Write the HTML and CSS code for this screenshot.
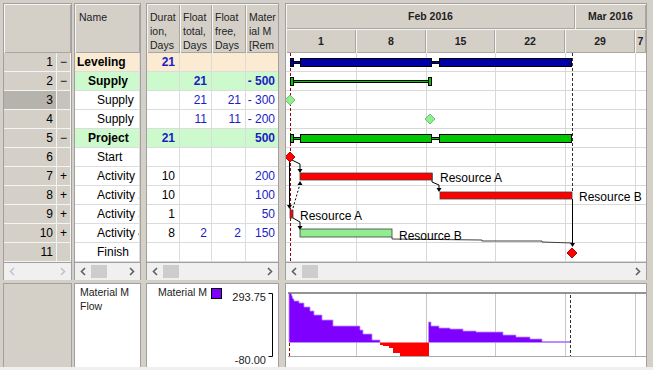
FILE: index.html
```html
<!DOCTYPE html>
<html lang="en">
<head>
    <meta charset="UTF-8">
    <title>Resource Leveling</title>
    <link rel="stylesheet" href="styles.css">
</head>
<body>
<div class="app">
    <div class="top">
        <!-- row numbers -->
        <div class="pane p-rows">
            <div class="hdr"><div class="hcell full"></div></div>
            <div class="grid">
                <div class="row"><span class="num">1</span><span class="exp">−</span></div>
                <div class="row"><span class="num">2</span><span class="exp">−</span></div>
                <div class="row sel"><span class="num">3</span><span class="exp"></span></div>
                <div class="row"><span class="num">4</span><span class="exp"></span></div>
                <div class="row"><span class="num">5</span><span class="exp">−</span></div>
                <div class="row"><span class="num">6</span><span class="exp"></span></div>
                <div class="row"><span class="num">7</span><span class="exp">+</span></div>
                <div class="row"><span class="num">8</span><span class="exp">+</span></div>
                <div class="row"><span class="num">9</span><span class="exp">+</span></div>
                <div class="row"><span class="num">10</span><span class="exp">+</span></div>
                <div class="row"><span class="num">11</span><span class="exp"></span></div>
            </div>
            <div class="scroll off">
                <span class="arrow"><svg width="6" height="9" viewBox="0 0 6 9"><path d="M5 1L1.5 4.5L5 8"/></svg></span>
                <span class="track"></span>
                <span class="arrow"><svg width="6" height="9" viewBox="0 0 6 9"><path d="M1 1L4.5 4.5L1 8"/></svg></span>
            </div>
        </div>

        <!-- names -->
        <div class="pane p-name">
            <div class="hdr"><div class="hcell full">Name</div></div>
            <div class="grid">
                <div class="row beige"><span class="name b">Leveling</span></div>
                <div class="row green"><span class="name b l1">Supply</span></div>
                <div class="row"><span class="name l2">Supply</span></div>
                <div class="row"><span class="name l2">Supply</span></div>
                <div class="row green"><span class="name b l1">Project</span></div>
                <div class="row"><span class="name l2">Start</span></div>
                <div class="row"><span class="name l2">Activity 1</span></div>
                <div class="row"><span class="name l2">Activity 2</span></div>
                <div class="row"><span class="name l2">Activity 3</span></div>
                <div class="row"><span class="name l2">Activity 4</span></div>
                <div class="row"><span class="name l2">Finish</span></div>
            </div>
            <div class="scroll">
                <span class="arrow"><svg width="6" height="9" viewBox="0 0 6 9"><path d="M5 1L1.5 4.5L5 8"/></svg></span>
                <span class="thumb"></span>
                <span class="track"></span>
                <span class="arrow"><svg width="6" height="9" viewBox="0 0 6 9"><path d="M1 1L4.5 4.5L1 8"/></svg></span>
            </div>
        </div>

        <!-- columns -->
        <div class="pane p-cols">
            <div class="hdr cols">
                <div class="hcell c-dur">Duration, Days</div>
                <div class="hcell c-ft">Float total, Days</div>
                <div class="hcell c-ff">Float free, Days</div>
                <div class="hcell c-mat">Material M [Remaining]</div>
            </div>
            <div class="grid">
                <div class="row beige"><span class="c-dur v b">21</span><span class="c-ft"></span><span class="c-ff"></span><span class="c-mat"></span></div>
                <div class="row green"><span class="c-dur"></span><span class="c-ft v b">21</span><span class="c-ff"></span><span class="c-mat v b">- 500</span></div>
                <div class="row"><span class="c-dur"></span><span class="c-ft v">21</span><span class="c-ff v">21</span><span class="c-mat v">- 300</span></div>
                <div class="row"><span class="c-dur"></span><span class="c-ft v">11</span><span class="c-ff v">11</span><span class="c-mat v">- 200</span></div>
                <div class="row green"><span class="c-dur v b">21</span><span class="c-ft"></span><span class="c-ff"></span><span class="c-mat v b">500</span></div>
                <div class="row"><span class="c-dur"></span><span class="c-ft"></span><span class="c-ff"></span><span class="c-mat"></span></div>
                <div class="row"><span class="c-dur">10</span><span class="c-ft"></span><span class="c-ff"></span><span class="c-mat v">200</span></div>
                <div class="row"><span class="c-dur">10</span><span class="c-ft"></span><span class="c-ff"></span><span class="c-mat v">100</span></div>
                <div class="row"><span class="c-dur">1</span><span class="c-ft"></span><span class="c-ff"></span><span class="c-mat v">50</span></div>
                <div class="row"><span class="c-dur">8</span><span class="c-ft v">2</span><span class="c-ff v">2</span><span class="c-mat v">150</span></div>
                <div class="row"><span class="c-dur"></span><span class="c-ft"></span><span class="c-ff"></span><span class="c-mat"></span></div>
            </div>
            <div class="scroll">
                <span class="arrow"><svg width="6" height="9" viewBox="0 0 6 9"><path d="M5 1L1.5 4.5L5 8"/></svg></span>
                <span class="thumb"></span>
                <span class="track"></span>
                <span class="arrow"><svg width="6" height="9" viewBox="0 0 6 9"><path d="M1 1L4.5 4.5L1 8"/></svg></span>
            </div>
        </div>

        <!-- gantt -->
        <div class="pane p-gantt">
            <div class="hdr timeline">
                <div class="months">
                    <div class="hcell" style="width:289px">Feb 2016</div>
                    <div class="hcell" style="width:71px">Mar 2016</div>
                </div>
                <div class="days">
                    <div class="hcell" style="width:70px">1</div>
                    <div class="hcell" style="width:70px">8</div>
                    <div class="hcell" style="width:69px">15</div>
                    <div class="hcell" style="width:70px">22</div>
                    <div class="hcell" style="width:70px">29</div>
                    <div class="hcell" style="width:11px">7</div>
                </div>
            </div>
            <svg class="chart" width="360" height="209" viewBox="0 0 360 209">
                <g class="gridlines">
                    <path d="M0 18.5H360M0 37.5H360M0 56.5H360M0 75.5H360M0 94.5H360M0 113.5H360M0 132.5H360M0 151.5H360M0 170.5H360M0 189.5H360M0 208.5H360"/>
                    <path d="M70.5 0V209M140.5 0V209M209.5 0V209M279.5 0V209M349.5 0V209"/>
                </g>
                <line class="now" x1="4.5" y1="0" x2="4.5" y2="209"/>
                <line class="finish-line" x1="286.5" y1="0" x2="286.5" y2="139"/>

                <!-- Leveling -->
                <g class="sum blue">
                    <rect x="4.5" y="5.5" width="3" height="8"/>
                    <rect x="7.5" y="8.5" width="7" height="2"/>
                    <rect x="14.5" y="5.5" width="131" height="8"/>
                    <rect x="145.5" y="8.5" width="8" height="2"/>
                    <rect x="153.5" y="5.5" width="132" height="8"/>
                </g>
                <!-- Supply -->
                <g class="sum green">
                    <rect x="4.5" y="24.5" width="3" height="8"/>
                    <rect x="7.5" y="27.5" width="136" height="2"/>
                    <rect x="142.5" y="24.5" width="3" height="8"/>
                </g>
                <polygon class="ms-green" points="4,42 9,47 4,52 -1,47"/>
                <polygon class="ms-green" points="144,61 149,66 144,71 139,66"/>
                <!-- Project -->
                <g class="sum green">
                    <rect x="4.5" y="81.5" width="3" height="8"/>
                    <rect x="7.5" y="84.5" width="7" height="2"/>
                    <rect x="14.5" y="81.5" width="131" height="8"/>
                    <rect x="145.5" y="84.5" width="8" height="2"/>
                    <rect x="153.5" y="81.5" width="132" height="8"/>
                </g>

                <!-- links -->
                <g class="links">
                    <polyline points="6,107 14,111 14,117"/>
                    <line x1="3.5" y1="109" x2="3.5" y2="153"/>
                    <line class="dash" x1="7" y1="155" x2="14" y2="131"/>
                    <polyline points="146,120 146,129 153,132 153,136"/>
                    <polyline points="7,165 14,169 14,173"/>
                    <line x1="286.5" y1="146" x2="286.5" y2="191"/>
                    <polyline class="soft" points="106,184 106,186 196,187 196,188 256,188 256,189 286,190"/>
                </g>
                <g class="heads">
                    <polygon points="11.5,116 16.5,116 14,120"/>
                    <polygon points="1,152 6,152 3.5,156"/>
                    <polygon points="11.5,132 16.5,132 14,128"/>
                    <polygon points="150.5,135 155.5,135 153,139"/>
                    <polygon points="11.5,173 16.5,173 14,177"/>
                    <polygon points="284,190 289,190 286.5,194"/>
                </g>

                <polygon class="ms-red" points="4,99 9,104 4,109 -1,104"/>
                <rect class="task red" x="14" y="120" width="132" height="7"/>
                <rect class="task red" x="154" y="139" width="132" height="7"/>
                <rect class="task red" x="4" y="157" width="3" height="8"/>
                <rect class="task lime" x="14" y="176" width="92" height="8"/>
                <polygon class="ms-red" points="286,195 291,200 286,205 281,200"/>

                <text x="154" y="129">Resource A</text>
                <text x="293" y="148">Resource B</text>
                <text x="14" y="167">Resource A</text>
                <text x="113" y="187">Resource B</text>
            </svg>
            <div class="scroll">
                <span class="arrow"><svg width="6" height="9" viewBox="0 0 6 9"><path d="M5 1L1.5 4.5L5 8"/></svg></span>
                <span class="thumb"></span>
                <span class="track"></span>
                <span class="arrow"><svg width="6" height="9" viewBox="0 0 6 9"><path d="M1 1L4.5 4.5L1 8"/></svg></span>
            </div>
        </div>
    </div>

    <!-- histogram -->
    <div class="bottom">
        <div class="pane b-rows"></div>
        <div class="pane b-name">Material M<br>Flow</div>
        <div class="pane b-legend">
            <svg width="131" height="83" viewBox="0 0 131 83">
                <text class="lg" x="11" y="12">Material M</text>
                <rect class="swatch" x="64.5" y="4.5" width="10" height="10"/>
                <text class="ax" x="119" y="16.5" text-anchor="end">293.75</text>
                <text class="ax" x="119" y="79.5" text-anchor="end">-80.00</text>
                <path class="axis" d="M121.5 9.5H125.5V72.5H121.5"/>
            </svg>
        </div>
        <div class="pane b-chart">
            <svg width="360" height="83" viewBox="0 0 360 83">
                <path class="hgrid" d="M70.5 9V73M140.5 9V73M209.5 9V73M279.5 9V73M349.5 9V73"/>
                <path class="pos" d="M3 58.5V9H5L7 15H8V17H13V19H18V23H24V27H28V31H36V36H47V42H74V46H77V50H86V56H94V58.5Z"/>
                <path class="neg" d="M94 58.5V61H97V62H103V64H107V69H114V72H143V58.5Z"/>
                <path class="pos" d="M142.5 58.5V38H145V42H153V44H164V45H177V47H190V48H217V51H230V53H244V55H256V57.5H284V58.5Z"/>
                <line class="now" x1="3.5" y1="59" x2="3.5" y2="73"/>
                <line class="finish-line" x1="284.5" y1="11" x2="284.5" y2="73"/>
                <line class="frame-top" x1="2" y1="9" x2="360" y2="9"/>
                <line class="frame-bot" x1="2" y1="72.5" x2="360" y2="72.5"/>
            </svg>
        </div>
    </div>
</div>
</body>
</html>
```

FILE: styles.css
```css
* {
    box-sizing: border-box;
}

body {
    margin: 0;
    background: #efefef;
    font-family: "Liberation Sans", Arial, sans-serif;
    font-size: 12px;
    color: #000;
}

.app {
    width: 653px;
    height: 367px;
    padding: 3px 0 0 3px;
    background: #d4d0c8;
}

.top {
    display: flex;
    height: 277px;
}

.pane {
    border: 1px solid #a0a0a0;
    border-bottom: none;
    display: flex;
    flex-direction: column;
    overflow: hidden;
    flex: none;
}

.p-rows { width: 69px; margin-right: 2px; }
.p-name { width: 67px; margin-right: 5px; }
.p-cols { width: 133px; margin-right: 6px; }
.p-gantt { width: 362px; }

/* header */
.hdr {
    height: 49px;
    display: flex;
    flex: none;
    overflow: hidden;
}

.hcell {
    background: #d4d0c8;
    box-shadow: inset 1px 1px 0 #f6f6f4, inset -1px -1px 0 #a8a6a0;
    font-size: 10.5px;
    line-height: 14px;
    color: #222;
    flex: none;
    overflow: hidden;
}

.hcell.full {
    width: 100%;
    padding: 6px 4px 0;
}

.hdr.cols .hcell {
    padding: 6px 3px 0;
    word-break: break-all;
}

.timeline {
    flex-direction: column;
}

.months, .days {
    display: flex;
}

.months .hcell {
    height: 25px;
    line-height: 24px;
    text-align: center;
    font-weight: bold;
}

.days .hcell {
    height: 24px;
    line-height: 24px;
    text-align: center;
    font-weight: bold;
}

/* grid rows */
.grid {
    height: 210px;
    flex: none;
    border-bottom: 1px solid #a0a0a0;
    background: #fff;
}

.row {
    display: flex;
    height: 19px;
    line-height: 18px;
    white-space: nowrap;
}

.row > span {
    flex: none;
    height: 19px;
    overflow: hidden;
    border-bottom: 1px solid #dcdcdc;
    border-right: 1px solid #dcdcdc;
}

.num {
    width: 53px;
    text-align: right;
    padding-right: 3px;
    background: #d4d0c8;
    border-color: #f4f4f2 !important;
}

.exp {
    width: 14px;
    text-align: center;
    background: #d4d0c8;
    border-color: #f4f4f2 !important;
}

.sel .num { background: #b6b3ac; }
.sel .exp { background: #c6c3bc; }

.name {
    width: 100%;
    padding-left: 2px;
}

.name.l1 { padding-left: 13px; }
.name.l2 { padding-left: 22px; }

.b { font-weight: bold; }

.beige > span { background: #faebd2; }
.green > span { background: #ccfacc; }

.c-dur { width: 33px; }
.c-ft { width: 32px; }
.c-ff { width: 34px; }
.c-mat { width: 34px; }

.grid .c-dur, .grid .c-ft, .grid .c-ff, .grid .c-mat {
    text-align: right;
    padding-right: 4px;
}

.v { color: #1c1cc4; }

/* scrollbars */
.scroll {
    height: 17px;
    flex: none;
    display: flex;
    align-items: center;
    background: #f0f0f0;
}

.arrow {
    width: 16px;
    height: 17px;
    display: flex;
    align-items: center;
    justify-content: center;
    flex: none;
}

.arrow path {
    fill: none;
    stroke: #606060;
    stroke-width: 1.6;
}

.off .arrow path { stroke: #c4c4c4; }

.thumb {
    width: 16px;
    height: 13px;
    background: #cdcdcd;
    flex: none;
}

.track { flex: 1; }

/* gantt */
.chart {
    display: block;
    background: #fff;
    flex: none;
    border-bottom: 1px solid #a0a0a0;
    height: 210px;
    font-family: "Liberation Sans", Arial, sans-serif;
    font-size: 12px;
}

.gridlines path {
    stroke: #d8d8d8;
    stroke-width: 1;
    fill: none;
}

.now {
    stroke: #a00000;
    stroke-width: 1;
    stroke-dasharray: 3 2;
}

.finish-line {
    stroke: #303030;
    stroke-width: 1;
    stroke-dasharray: 3 2;
}

.sum rect {
    stroke: #000;
    stroke-width: 1;
}

.sum.blue rect { fill: #0000a8; }
.sum.green rect { fill: #00c800; }

.ms-green {
    fill: #90ee90;
    stroke: #70c070;
}

.ms-red {
    fill: #ff0000;
    stroke: #c00000;
}

.task {
    stroke: #404040;
    stroke-width: 0.8;
}

.task.red { fill: #ff0000; }
.task.lime { fill: #90ee90; }

.links polyline, .links line {
    fill: none;
    stroke: #000;
    stroke-width: 1;
}

.links .dash { stroke-dasharray: 2 2; }
.links .soft { stroke: #404040; }

.heads polygon { fill: #000; }

/* bottom */
.bottom {
    display: flex;
    margin-top: 3px;
    height: 84px;
}

.bottom .pane {
    height: 84px;
}

.b-rows { width: 69px; margin-right: 2px; background: #d4d0c8; }
.b-name {
    width: 67px;
    margin-right: 5px;
    background: #fff;
    display: block;
    padding: 1px 5px;
    font-size: 10.5px;
    line-height: 14px;
    color: #222;
}
.b-legend { width: 133px; margin-right: 6px; background: #fff; }
.b-chart { width: 362px; background: #fff; }

.b-legend svg, .b-chart svg {
    display: block;
    font-family: "Liberation Sans", Arial, sans-serif;
}

.lg { font-size: 10.5px; fill: #222; }
.ax { font-size: 11px; fill: #222; }

.swatch {
    fill: #8000ff;
    stroke: #000;
}

.axis {
    fill: none;
    stroke: #000;
    stroke-width: 1;
}

.hgrid {
    stroke: #c8c8c8;
    fill: none;
}

.pos {
    fill: #8000ff;
    stroke: #b890ff;
    stroke-width: 0.8;
}

.neg { fill: #ff0000; }

.frame-top {
    stroke: #707070;
    stroke-width: 1.5;
}

.frame-bot {
    stroke: #a8a8a8;
    stroke-width: 1;
}
```
